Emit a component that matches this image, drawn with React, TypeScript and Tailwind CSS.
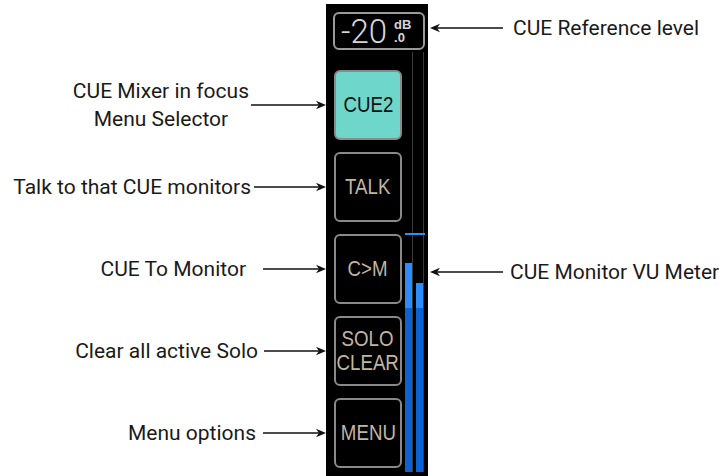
import React from 'react'

type ArrowProps = { w: number; left?: boolean }

function Arrow({ w, left }: ArrowProps) {
  return (
    <svg width={w} height={10} viewBox={`0 0 ${w} 10`} className="shrink-0">
      <g transform={left ? `translate(${w},0) scale(-1,1)` : undefined}>
        <line x1={0} y1={5} x2={w - 5} y2={5} stroke="#111" strokeWidth={1.3} />
        <path d={`M${w} 5 L${w - 10} 0.8 L${w - 7} 5 L${w - 10} 9.2 Z`} fill="#111" />
      </g>
    </svg>
  )
}

const labels = [
  { text: ['CUE Mixer in focus', 'Menu Selector'], arrow: 75, gap: 'gap-[2px]' },
  { text: ['Talk to that CUE monitors'], arrow: 72, gap: 'gap-[3px]' },
  { text: ['CUE To Monitor'], arrow: 63, gap: 'gap-[17px]' },
  { text: ['Clear all active Solo'], arrow: 62, gap: 'gap-[6px]' },
  { text: ['Menu options'], arrow: 63, gap: 'gap-[7px]' },
]

const buttons = [
  { label: ['CUE2'], active: true },
  { label: ['TALK'] },
  { label: ['C>M'] },
  { label: ['SOLO', 'CLEAR'] },
  { label: ['MENU'] },
]

export default function App() {
  return (
    <div className="w-[719px] h-[476px] bg-white flex overflow-hidden font-['Roboto',sans-serif] text-[21px] text-[#1a1a1a]">
      {/* Left callouts */}
      <div className="w-[326px] shrink-0 pt-[70px] flex flex-col gap-[12px]">
        {labels.map((l, i) => (
          <div key={i} className={`h-[70px] flex items-center justify-end ${l.gap}`}>
            <div className="text-center leading-[28px]">
              {l.text.map((t) => (
                <div key={t}>{t}</div>
              ))}
            </div>
            <Arrow w={l.arrow} />
          </div>
        ))}
      </div>

      {/* Device strip */}
      <div className="w-[102px] shrink-0 mt-[4px] bg-black flex flex-col pl-[7px] pr-[3px] pt-[8px] font-['Liberation_Sans',Arial,sans-serif]">
        {/* Reference level */}
        <div className="h-[38px] border-2 border-[#9a9a9a] rounded-[6px] flex items-center pl-[6px] text-[#d6d6d6]">
          <span className="font-['Roboto',sans-serif] font-light text-[33px] leading-none">-20</span>
          <div className="ml-[7px] flex flex-col text-[13px] font-bold leading-[13px]">
            <span>dB</span>
            <span>.0</span>
          </div>
        </div>

        <div className="flex-1 flex gap-[3px]">
          {/* Buttons */}
          <div className="w-[69px] pl-px pt-[20px] flex flex-col gap-[12px]">
            {buttons.map((b) => (
              <div
                key={b.label.join()}
                className={`h-[70px] rounded-[6px] border-2 border-[#8a8a8a] flex flex-col items-center justify-center text-[22px] leading-[24px] ${
                  b.active ? 'bg-[#6fd6cb] text-[#111]' : 'bg-black text-[#c0b6a2]'
                }`}
              >
                {b.label.map((t) => (
                  <span key={t} className="scale-x-[0.85] whitespace-nowrap">{t}</span>
                ))}
              </div>
            ))}
          </div>

          {/* VU meter */}
          <div className="relative w-[20px] mt-[2px] mb-[4px] flex gap-[3px]">
            <div className="w-[8px] border-r border-[#3a3a3a] flex flex-col justify-end">
              <div className="h-[45px] bg-[#2a8cff]" />
              <div className="h-[164px] bg-[#0b62d6]" />
            </div>
            <div className="w-[8px] border-r border-[#3a3a3a] flex flex-col justify-end">
              <div className="h-[25px] bg-[#2a8cff]" />
              <div className="h-[164px] bg-[#0b62d6]" />
            </div>
            <div className="absolute left-0 right-0 top-[181px] h-[2px] bg-[#2f8cff]" />
          </div>
        </div>
      </div>

      {/* Right callouts */}
      <div className="flex-1 pl-[2px] flex flex-col">
        <div className="mt-[16px] h-[24px] flex items-center gap-[10px]">
          <Arrow w={73} left />
          <span className="leading-none whitespace-nowrap">CUE Reference level</span>
        </div>
        <div className="mt-[220px] h-[24px] flex items-center gap-[7px]">
          <Arrow w={73} left />
          <span className="leading-none whitespace-nowrap">CUE Monitor VU Meter</span>
        </div>
      </div>
    </div>
  )
}
